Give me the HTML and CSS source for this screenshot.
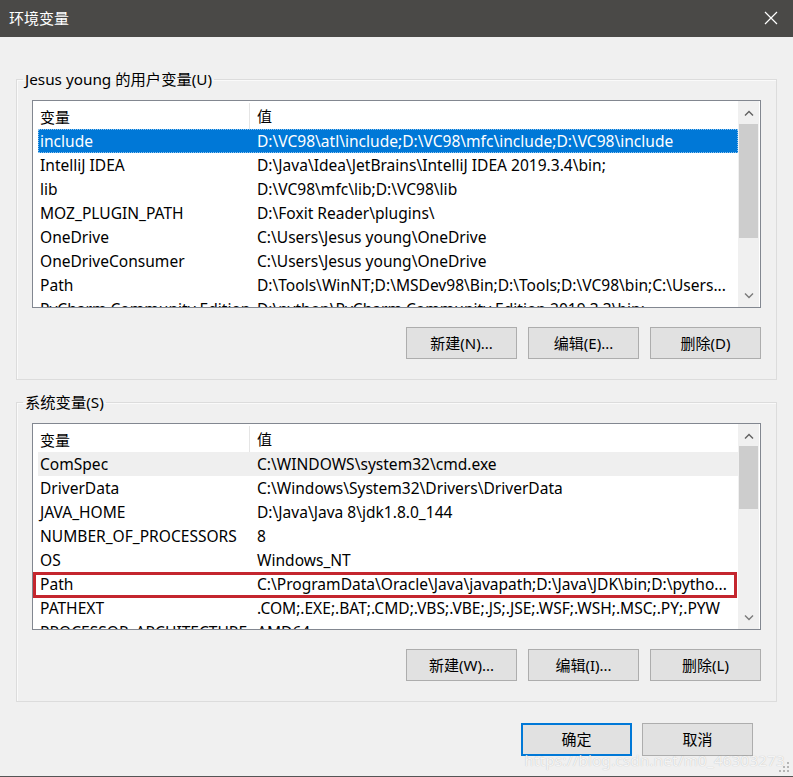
FILE: index.html
```html
<!DOCTYPE html>
<html lang="zh-CN">
<head>
<meta charset="utf-8">
<title>环境变量</title>
<link rel="stylesheet" href="styles.css">
</head>
<body>
<div class="window">
  <div class="titlebar">
    <span class="title">环境变量</span>
    <svg class="close" width="14" height="14" viewBox="0 0 14 14"><path d="M1 1 L13 13 M13 1 L1 13" stroke="#fff" stroke-width="1.2" fill="none"/></svg>
  </div>
  <div class="content">
    <fieldset class="group">
      <legend>Jesus young 的用户变量(U)</legend>
      <div class="list">
        <div class="list-body">
          <div class="header">
            <div class="hcell name">变量</div>
            <div class="hcell value">值</div>
          </div>
          <div class="rows">
            <div class="row selected"><div class="cell">include</div><div class="cell v">D:\VC98\atl\include;D:\VC98\mfc\include;D:\VC98\include</div></div>
            <div class="row"><div class="cell">IntelliJ IDEA</div><div class="cell v">D:\Java\Idea\JetBrains\IntelliJ IDEA 2019.3.4\bin;</div></div>
            <div class="row"><div class="cell">lib</div><div class="cell v">D:\VC98\mfc\lib;D:\VC98\lib</div></div>
            <div class="row"><div class="cell">MOZ_PLUGIN_PATH</div><div class="cell v">D:\Foxit Reader\plugins\</div></div>
            <div class="row"><div class="cell">OneDrive</div><div class="cell v">C:\Users\Jesus young\OneDrive</div></div>
            <div class="row"><div class="cell">OneDriveConsumer</div><div class="cell v">C:\Users\Jesus young\OneDrive</div></div>
            <div class="row"><div class="cell">Path</div><div class="cell v">D:\Tools\WinNT;D:\MSDev98\Bin;D:\Tools;D:\VC98\bin;C:\Users...</div></div>
            <div class="row"><div class="cell">PyCharm Community Edition</div><div class="cell v">D:\python\PyCharm Community Edition 2019.3.3\bin;</div></div>
          </div>
        </div>
        <div class="scrollbar">
          <div class="sb-btn"><svg width="10" height="6" viewBox="0 0 10 6"><path d="M1 5.5 L5 1.5 L9 5.5" stroke="#606060" stroke-width="1.4" fill="none"/></svg></div>
          <div class="sb-track"><div class="thumb thumb-user"></div></div>
          <div class="sb-btn"><svg width="10" height="6" viewBox="0 0 10 6"><path d="M1 0.5 L5 4.5 L9 0.5" stroke="#7a7a7a" stroke-width="1.4" fill="none"/></svg></div>
        </div>
      </div>
      <div class="buttons">
        <button class="btn">新建(N)...</button>
        <button class="btn">编辑(E)...</button>
        <button class="btn">删除(D)</button>
      </div>
    </fieldset>

    <fieldset class="group group2">
      <legend>系统变量(S)</legend>
      <div class="list list2">
        <div class="list-body">
          <div class="header">
            <div class="hcell name">变量</div>
            <div class="hcell value">值</div>
          </div>
          <div class="rows">
            <div class="row hover"><div class="cell">ComSpec</div><div class="cell v">C:\WINDOWS\system32\cmd.exe</div></div>
            <div class="row"><div class="cell">DriverData</div><div class="cell v">C:\Windows\System32\Drivers\DriverData</div></div>
            <div class="row"><div class="cell">JAVA_HOME</div><div class="cell v">D:\Java\Java 8\jdk1.8.0_144</div></div>
            <div class="row"><div class="cell">NUMBER_OF_PROCESSORS</div><div class="cell v">8</div></div>
            <div class="row"><div class="cell">OS</div><div class="cell v">Windows_NT</div></div>
            <div class="row marked"><div class="cell">Path</div><div class="cell v">C:\ProgramData\Oracle\Java\javapath;D:\Java\JDK\bin;D:\pytho...</div></div>
            <div class="row"><div class="cell">PATHEXT</div><div class="cell v">.COM;.EXE;.BAT;.CMD;.VBS;.VBE;.JS;.JSE;.WSF;.WSH;.MSC;.PY;.PYW</div></div>
            <div class="row"><div class="cell">PROCESSOR_ARCHITECTURE</div><div class="cell v">AMD64</div></div>
          </div>
        </div>
        <div class="scrollbar">
          <div class="sb-btn"><svg width="10" height="6" viewBox="0 0 10 6"><path d="M1 5.5 L5 1.5 L9 5.5" stroke="#606060" stroke-width="1.4" fill="none"/></svg></div>
          <div class="sb-track"><div class="thumb thumb-sys"></div></div>
          <div class="sb-btn"><svg width="10" height="6" viewBox="0 0 10 6"><path d="M1 0.5 L5 4.5 L9 0.5" stroke="#7a7a7a" stroke-width="1.4" fill="none"/></svg></div>
        </div>
      </div>
      <div class="buttons">
        <button class="btn">新建(W)...</button>
        <button class="btn">编辑(I)...</button>
        <button class="btn">删除(L)</button>
      </div>
    </fieldset>

    <div class="dialog-buttons">
      <button class="btn default">确定</button>
      <button class="btn">取消</button>
    </div>
  </div>
  <div class="watermark">https://blog.csdn.net/m0_46303273</div>
  <svg class="grip" width="12" height="12" viewBox="0 0 12 12">
    <rect x="9" y="1" width="2" height="2" fill="#b5b5b5"/>
    <rect x="5" y="5" width="2" height="2" fill="#b5b5b5"/>
    <rect x="9" y="5" width="2" height="2" fill="#b5b5b5"/>
    <rect x="1" y="9" width="2" height="2" fill="#b5b5b5"/>
    <rect x="5" y="9" width="2" height="2" fill="#b5b5b5"/>
    <rect x="9" y="9" width="2" height="2" fill="#b5b5b5"/>
  </svg>
</div>
</body>
</html>
```

FILE: styles.css
```css
* { box-sizing: border-box; }
html, body {
  margin: 0;
  padding: 0;
  background: #f0f0f0;
}
body {
  font-family: "Noto Sans", "Noto Sans CJK SC", sans-serif;
  font-size: 15px;
  color: #000;
}
.window {
  position: relative;
  width: 793px;
  height: 777px;
  background: #f0f0f0;
  border-bottom: 1px solid #555;
  overflow: hidden;
}
.titlebar {
  height: 37px;
  background: #4a4947;
  display: flex;
  align-items: center;
  justify-content: space-between;
  padding: 0 15px 2px 9px;
}
.title {
  color: #fff;
  font-size: 15px;
  line-height: 20px;
}
.close {
  display: block;
  margin-top: 1px;
}
.content {
  padding: 32px 16px 0 16px;
}
.group {
  margin: 0;
  padding: 11px 15px 20px 15px;
  border: 1px solid #dcdcdc;
  box-shadow: inset 1px 1px 0 #fafafa;
  min-width: 0;
}
.group legend {
  padding: 0 2px;
  margin-left: -9px;
  line-height: 20px;
  font-size: 15.3px;
}
.group2 {
  margin-top: 12px;
}
.list {
  height: 208px;
  border: 1px solid #828790;
  background: #fff;
  display: flex;
}
.list2 {
  height: 207px;
}
.list-body {
  flex: 1;
  min-width: 0;
  overflow: hidden;
}
.header {
  height: 28px;
  display: grid;
  grid-template-columns: 217px 1fr;
  align-items: center;
}
.hcell {
  padding-left: 7px;
  height: 100%;
  display: flex;
  align-items: center;
  white-space: nowrap;
}
.hcell.name {
  border-right: 1px solid #e5e5e5;
  height: 26px;
  margin-top: 2px;
}
.rows {
  padding-left: 5px;
}
.row {
  position: relative;
  height: 24px;
  display: grid;
  grid-template-columns: 212px 1fr;
  align-items: center;
  white-space: nowrap;
  font-size: 15.55px;
}
.cell {
  padding-left: 2px;
  overflow: hidden;
  line-height: 24px;
}
.cell.v {
  padding-left: 7px;
}
.row.selected {
  background: #0078d7;
  color: #fff;
  outline: 1px dotted #8cc3ef;
  outline-offset: -1px;
}
.row.hover {
  background: #efefef;
}
.row.marked::after {
  content: "";
  position: absolute;
  top: 0;
  bottom: -2px;
  left: -5px;
  right: 1px;
  border: 3px solid #c4262e;
  pointer-events: none;
}
.scrollbar {
  width: 22px;
  flex: none;
  background: #f0f0f0;
  border-right: 1px solid #fff;
  display: flex;
  flex-direction: column;
}
.sb-btn {
  height: 23px;
  display: flex;
  align-items: center;
  justify-content: center;
  flex: none;
}
.sb-track {
  flex: 1;
  padding: 0 1px;
}
.thumb {
  background: #cdcdcd;
}
.thumb-user { height: 114px; }
.thumb-sys { height: 63px; margin-top: -1px; }
.buttons {
  display: flex;
  justify-content: flex-end;
  gap: 11px;
  margin-top: 19px;
}
.btn {
  width: 111px;
  height: 32px;
  background: #e1e1e1;
  border: 1px solid #adadad;
  border-radius: 0;
  font-family: "Noto Sans", "Noto Sans CJK SC", sans-serif;
  font-size: 15px;
  color: #000;
  padding: 0;
  line-height: 1;
}
.dialog-buttons {
  display: flex;
  justify-content: flex-end;
  gap: 10px;
  margin-top: 21px;
  padding-right: 24px;
}
.dialog-buttons .btn {
  height: 33px;
}
.btn.default {
  border: 2px solid #0078d7;
}
.watermark {
  position: absolute;
  right: 8px;
  bottom: 6px;
  font-size: 15px;
  color: rgba(255, 255, 255, 0.85);
  text-shadow: 0 0 1px rgba(0, 0, 0, 0.25);
  letter-spacing: 0.3px;
}
.grip {
  position: absolute;
  right: 3px;
  bottom: 3px;
}
```
